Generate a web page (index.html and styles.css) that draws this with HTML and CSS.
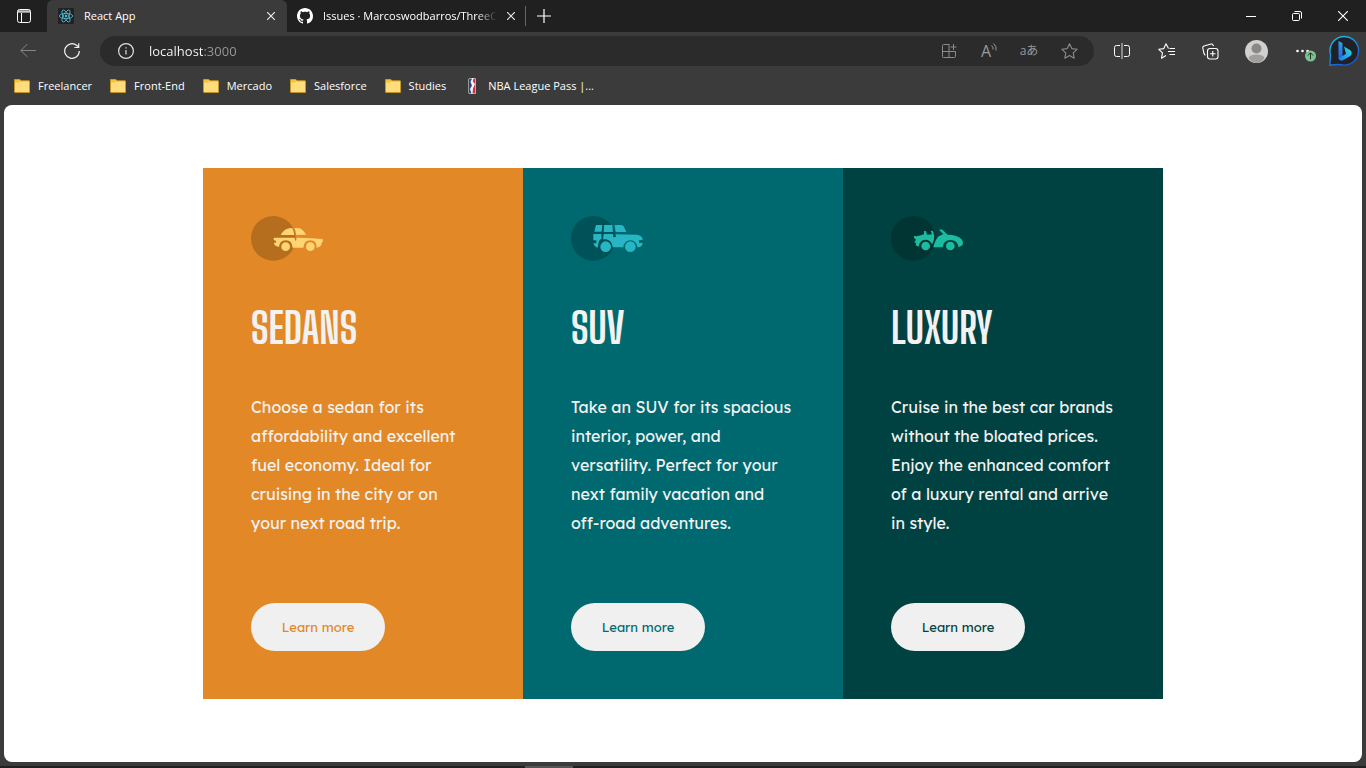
FILE: index.html
```html
<!DOCTYPE html>
<html lang="en">
<head>
<meta charset="utf-8">
<meta name="viewport" content="width=device-width, initial-scale=1">
<title>React App</title>
<link rel="stylesheet" href="styles.css">
</head>
<body>
<header class="browser">
  <div class="tabstrip">
    <button class="tab-actions" aria-label="Tab actions"><svg width="14" height="14" viewBox="0 0 14 14" fill="none" stroke="#fff"><rect x=".5" y=".5" width="13" height="13" rx="2"/><path d="M1 2h12M1 3h12M4.500 4v9"/></svg></button>
    <div class="tab tab-active">
      <svg class="favicon" width="16" height="16" viewBox="0 0 16 16" fill="none" stroke="#53c1de" stroke-width=".8"><rect width="16" height="16" rx="1" fill="#222" stroke="none"/><ellipse cx="8" cy="8" rx="6.700" ry="2.600"/><ellipse cx="8" cy="8" rx="6.700" ry="2.600" transform="rotate(60 8 8)"/><ellipse cx="8" cy="8" rx="6.700" ry="2.600" transform="rotate(120 8 8)"/><circle cx="8" cy="8" r="1.200" fill="#53c1de" stroke="none"/></svg>
      <a class="tab-title" href="#">React App</a>
      <button class="tab-close" aria-label="Close tab"><svg width="8" height="8" viewBox="0 0 8 8" stroke="#e8e8e8" stroke-width="1.200"><path d="M0 0l8 8M8 0L0 8"/></svg></button>
    </div>
    <div class="tab">
      <svg class="favicon" width="16" height="16" viewBox="0 0 16 16" fill="#fff"><path d="M8 0C3.580 0 0 3.580 0 8c0 3.540 2.290 6.530 5.470 7.590.4.070.55-.17.55-.38 0-.19-.01-.82-.01-1.490-2.010.37-2.530-.49-2.690-.94-.09-.23-.48-.94-.82-1.130-.28-.15-.68-.52-.01-.53.63-.01 1.080.58 1.230.82.72 1.210 1.870.87 2.330.66.070-.52.28-.87.51-1.070-1.780-.2-3.640-.89-3.640-3.950 0-.87.31-1.590.82-2.150-.08-.2-.36-1.020.08-2.120 0 0 .67-.21 2.200.82.64-.18 1.320-.27 2-.27s1.360.09 2 .27c1.530-1.040 2.200-.82 2.200-.82.44 1.100.16 1.920.08 2.120.51.56.82 1.270.82 2.150 0 3.070-1.870 3.750-3.650 3.950.29.25.54.73.54 1.480 0 1.070-.01 1.930-.01 2.200 0 .21.15.46.55.38A8.010 8.010 0 0016 8c0-4.420-3.580-8-8-8z"/></svg>
      <a class="tab-title tab-fade" href="#">Issues · Marcoswodbarros/ThreeC</a>
      <button class="tab-close" aria-label="Close tab"><svg width="8" height="8" viewBox="0 0 8 8" stroke="#e8e8e8" stroke-width="1.200"><path d="M0 0l8 8M8 0L0 8"/></svg></button>
    </div>
    <button class="new-tab" aria-label="New tab"><svg width="14" height="14" viewBox="0 0 14 14" stroke="#fff" stroke-width="1.200"><path d="M0 7h14M7 0v14"/></svg></button>
    <div class="window-controls">
      <button class="window-button" aria-label="Minimize"><svg width="10" height="10" viewBox="0 0 10 10" stroke="#fff"><path d="M0 5.500h10"/></svg></button>
      <button class="window-button" aria-label="Restore"><svg width="10" height="10" viewBox="0 0 10 10" fill="none" stroke="#fff"><rect x=".5" y="2.500" width="7" height="7" rx="1"/><path d="M2.500 .5H8q1.500 0 1.500 1.500v5.500"/></svg></button>
      <button class="window-button" aria-label="Close"><svg width="10" height="10" viewBox="0 0 10 10" stroke="#fff" stroke-width="1.100"><path d="M0 0l10 10M10 0L0 10"/></svg></button>
    </div>
  </div>

  <div class="toolbar">
    <button class="tool" aria-label="Back"><svg width="16" height="14" viewBox="0 0 16 14" fill="none" stroke="#858585"><path d="M16 6.500H.8M7.500 0L.8 6.500l6.700 6.500"/></svg></button>
    <button class="tool" aria-label="Refresh"><svg width="16" height="16" viewBox="0 0 16 16" fill="none" stroke="#f2f2f2" stroke-width="1.200"><path d="M15.300 8A7.300 7.300 0 1 1 12.800 2.500L14.500 4.200M14.700.3v4.200h-4.300"/></svg></button>
    <div class="address">
      <button class="site-info" aria-label="Site information"><svg width="16" height="16" viewBox="0 0 16 16" fill="none" stroke="#e0e0e0" stroke-width="1.200"><circle cx="8" cy="8" r="7.400"/><path d="M8 7v4.500M8 4.300v1.200"/></svg></button>
      <input class="url" type="text" aria-label="Address" value="localhost:3000">
      <button class="address-tool" aria-label="Apps"><svg width="16" height="16" viewBox="0 0 16 16" fill="none" stroke="#8b8b8b"><path d="M8.500 1.500h-6q-1 0-1 1v11q0 1 1 1h11q1 0 1-1v-5h-13M8 1.500v13M12.500 1v6M9.500 4h6"/></svg></button>
      <button class="address-tool read-aloud" aria-label="Read aloud"><span>A</span><svg width="6" height="10" viewBox="0 0 6 10" fill="none" stroke="#999"><path d="M.5 2.500q2 1.500 1.500 4M2.500.5q3.500 3 2.500 7"/></svg></button>
      <button class="address-tool translate" aria-label="Translate">aあ</button>
      <button class="address-tool" aria-label="Add to favorites"><svg width="17" height="16" viewBox="0 0 17 16" fill="none" stroke="#8b8b8b" stroke-width="1.100" stroke-linejoin="round"><path d="M8.500.8l2.300 4.800 5.300.7-3.900 3.600 1 5.300-4.700-2.600-4.700 2.600 1-5.300L.9 6.300l5.300-.7z"/></svg></button>
    </div>
    <button class="tool" aria-label="Split screen"><svg width="16" height="16" viewBox="0 0 16 16" fill="none" stroke="#fff"><path d="M6 2.500H2.500q-2 0-2 2v7q0 2 2 2H6M10 2.500h3.500q2 0 2 2v7q0 2-2 2H10"/><path d="M8 0v16" stroke="#ddd"/></svg></button>
    <button class="tool" aria-label="Favorites"><svg width="17" height="16" viewBox="0 0 17 16" fill="none" stroke="#fff" stroke-width="1.100" stroke-linejoin="round"><path d="M10.500 5.500L8 .8 5.800 5.600l-5 .7 3.700 3.500-1 5.400L8 12.500M11.500 5.500H17M10 8.500h7M11.500 11.500H17"/></svg></button>
    <button class="tool" aria-label="Collections"><svg width="17" height="17" viewBox="0 0 17 17" fill="none" stroke="#fff" stroke-width="1.100"><path d="M3.500 12Q2.500 12 2 10.500L.8 5Q.5 3.500 2 3L9 1q1.500-.3 2 1l.6 1"/><rect x="5.500" y="5.500" width="10.500" height="10.500" rx="2.500"/><path d="M10.750 8v5.500M8 10.750h5.500"/></svg></button>
    <button class="tool tool-profile" aria-label="Profile"><svg width="23" height="23" viewBox="0 0 23 23"><circle cx="11.500" cy="11.500" r="11.500" fill="#d2d0ce"/><circle cx="11.500" cy="8.500" r="5" fill="#8a8886"/><path d="M3.500 18q1-3.500 8-3.500t8 3.500q-3 5-8 5t-8-5z" fill="#a19f9d"/></svg></button>
    <button class="tool tool-more" aria-label="Settings and more"><svg width="26" height="22" viewBox="0 0 26 22"><g fill="#fff"><circle cx="6.500" cy="11" r="1.300"/><circle cx="11.500" cy="11" r="1.300"/><circle cx="16.500" cy="11" r="1.300"/></g><circle cx="19.500" cy="16" r="5.500" fill="#7cc48d"/><path d="M19.500 19.300V13M16.800 15.500l2.700-2.700 2.700 2.700" fill="none" stroke="#252b26"/></svg></button>
    <button class="bing" aria-label="Bing chat"><svg width="32" height="32" viewBox="0 0 32 32"><defs><linearGradient id="ring" x1="0" y1="0" x2=".6" y2="1"><stop offset="0" stop-color="#1fc5e8"/><stop offset="1" stop-color="#1757d6"/></linearGradient><linearGradient id="bee" x1="0" y1="0" x2="0" y2="1"><stop offset="0" stop-color="#29a5ee"/><stop offset="1" stop-color="#245fe6"/></linearGradient><linearGradient id="tail" x1="1" y1="0" x2="0" y2="1"><stop offset="0" stop-color="#2ce0dd"/><stop offset="1" stop-color="#1f76f1"/></linearGradient></defs><path d="M1.800 30.200L2.600 20A14.300 14.300 0 1 1 16 30.100Q11 29 1.800 30.200z" fill="#202124" stroke="url(#ring)" stroke-width="1.400"/><path d="M10.500 6l4 2v13.500l-4 2.500z" fill="url(#bee)"/><path d="M16 11.500l5.500 3.200q2.700 1.600 2 4.200-.5 1.600-2 2.500L15 25.300q-3.500 1.200-4.500-1.800l7.500-4.700z" fill="url(#tail)"/></svg></button>
  </div>

  <nav class="bookmarks" aria-label="Favorites bar">
    <a class="bookmark" href="#"><svg width="16" height="14" viewBox="0 0 16 14"><path d="M.5 1q0-.8.8-.8h4.200L7 1.800h8q.7 0 .7.800v10.200q0 .8-.8.8H1.300q-.8 0-.8-.8z" fill="#ffdc7c" stroke="#c8951b"/><path d="M1 1h4.300l1.200 1.200L5.200 3.500H1z" fill="#f5c531"/></svg>Freelancer</a>
    <a class="bookmark" href="#"><svg width="16" height="14" viewBox="0 0 16 14"><path d="M.5 1q0-.8.8-.8h4.200L7 1.800h8q.7 0 .7.800v10.200q0 .8-.8.8H1.300q-.8 0-.8-.8z" fill="#ffdc7c" stroke="#c8951b"/><path d="M1 1h4.300l1.200 1.200L5.200 3.500H1z" fill="#f5c531"/></svg>Front-End</a>
    <a class="bookmark" href="#"><svg width="16" height="14" viewBox="0 0 16 14"><path d="M.5 1q0-.8.8-.8h4.200L7 1.800h8q.7 0 .7.800v10.200q0 .8-.8.8H1.300q-.8 0-.8-.8z" fill="#ffdc7c" stroke="#c8951b"/><path d="M1 1h4.300l1.200 1.200L5.200 3.500H1z" fill="#f5c531"/></svg>Mercado</a>
    <a class="bookmark" href="#"><svg width="16" height="14" viewBox="0 0 16 14"><path d="M.5 1q0-.8.8-.8h4.200L7 1.800h8q.7 0 .7.800v10.200q0 .8-.8.8H1.300q-.8 0-.8-.8z" fill="#ffdc7c" stroke="#c8951b"/><path d="M1 1h4.300l1.200 1.200L5.200 3.500H1z" fill="#f5c531"/></svg>Salesforce</a>
    <a class="bookmark" href="#"><svg width="16" height="14" viewBox="0 0 16 14"><path d="M.5 1q0-.8.8-.8h4.200L7 1.800h8q.7 0 .7.800v10.200q0 .8-.8.8H1.300q-.8 0-.8-.8z" fill="#ffdc7c" stroke="#c8951b"/><path d="M1 1h4.300l1.200 1.200L5.200 3.500H1z" fill="#f5c531"/></svg>Studies</a>
    <a class="bookmark" href="#"><svg width="16" height="16" viewBox="0 0 16 16"><rect x="4.500" width="7.500" height="16" rx="1.500" fill="#f4f4f6"/><path d="M5 1.500q0-1 1-1h2L6.500 4 8 7.500 6 11l1.500 4.500H6q-1 0-1-1z" fill="#24478f"/><path d="M9.500.5h1q1 0 1 1v13q0 1-1 1H8.500l.5-5L11 6 8.800 3.500z" fill="#cf2f45"/></svg>NBA League Pass |...</a>
  </nav>
</header>

<main class="page">
  <div class="cards">
    <section class="card card-sedans">
      <svg class="car" width="72" height="45" viewBox="0 0 216 135"><circle cx="67" cy="67" r="67" fill="#b56d1e"/><g fill="#ffd473"><path d="M89 57q9-15 18-18 8-3 17-3 5 10 6 21zM130 36q14-1 20 2 8 6 16 18l-30 1q-1-11-6-21z"/><path d="M70 65h61q1 10 3 10t3-10q50 1 77 4 3 5 0 10h-2q1 9-6 13-4 2-9 3 0-22-19-22t-21 22h-32q-2-22-21-22-18 0-20 20l-9-3q-6-3-6-10h6v-6l-6-1q-2-5 0-8z"/><circle cx="104" cy="92" r="13"/><circle cx="178" cy="92" r="13"/></g></svg>
      <h2 class="card-title">SEDANS</h2>
      <p class="card-text">Choose a sedan for its affordability and excellent fuel economy. Ideal for cruising in the city or on your next road trip.</p>
      <button class="learn">Learn more</button>
    </section>
    <section class="card card-suv">
      <svg class="car" width="72" height="45" viewBox="0 0 216 135"><circle cx="67" cy="67" r="67" fill="#005259"/><g fill="#28b5c4"><path d="M75 27h19l-2 20H70zM99 27h25l2 21H98zM131 27h18q6 0 9 4l8 17h-32z"/><path d="M67 54h24l1 13q-8 5-10 17-1 6-2 11-11-3-13-13h9v-9h-9zM98 54h28l1 10 8-1-1-8 63 1q15 2 17 10l1 6h-11v9h11q0 10-12 13h-4a21 21 0 0 0-42 0h-32q-1-20-20-24-6-1-9 0z"/><circle cx="104" cy="92" r="16"/><circle cx="178" cy="92" r="16"/></g></svg>
      <h2 class="card-title">SUV</h2>
      <p class="card-text">Take an SUV for its spacious interior, power, and versatility. Perfect for your next family vacation and off-road adventures.</p>
      <button class="learn">Learn more</button>
    </section>
    <section class="card card-luxury">
      <svg class="car" width="72" height="45" viewBox="0 0 216 135"><circle cx="67" cy="67" r="67" fill="#003534"/><g fill="#1bbca0"><path d="M68 60q16 2 31-5V46q3-3 6 0l3 10 15-1-4-10q5-3 8 3 4 12 2 23l-5 12h-2q-6-12-19-12-17 1-20 21l-9-4 1-7-5-2 5-8-5-4z"/><path d="M145 43q4-6 10-1l15 14q30 0 43 15 5 9 1 17l-11 6q-3-22-25-22-21 1-23 22h-28q2-14 14-32l16-8z"/><circle cx="104" cy="90" r="13"/><circle cx="178" cy="90" r="13"/></g></svg>
      <h2 class="card-title">LUXURY</h2>
      <p class="card-text">Cruise in the best car brands without the bloated prices. Enjoy the enhanced comfort of a luxury rental and arrive in style.</p>
      <button class="learn">Learn more</button>
    </section>
  </div>
</main>
<footer class="taskbar"><span class="running-app"></span></footer>
</body>
</html>
```
FILE: styles.css
```css
* { box-sizing: border-box; }

body {
  margin: 0;
  min-height: 100vh;
  display: flex;
  flex-direction: column;
  background: #3b3b3b;
  color: #fff;
  font: 11px/16px "Segoe UI", "Open Sans", sans-serif;
}

button {
  display: flex;
  align-items: center;
  justify-content: center;
  flex: none;
  padding: 0;
  border: 0;
  background: none;
  color: inherit;
  font: inherit;
}

a { color: inherit; text-decoration: none; }
svg { display: block; flex: none; }

/* Tab strip */
.tabstrip { display: flex; height: 32px; background: #202020; }
.tab-actions { width: 47px; }
.tab {
  display: flex;
  align-items: center;
  width: 240px;
  padding: 0 11px;
  gap: 10px;
  border-right: 1px solid transparent;
}
.tab-active { background: #3b3b3b; border-radius: 6px 6px 0 0; }
.tab + .tab { position: relative; padding-left: 10px; }
.tab + .tab::after {
  content: "";
  position: absolute;
  right: 0;
  top: 6px;
  width: 1px;
  height: 20px;
  background: #666;
}
.tab-title { flex: 1; white-space: nowrap; }
.tab-fade {
  -webkit-mask-image: linear-gradient(to left, transparent, #000 20px);
  mask-image: linear-gradient(to left, transparent, #000 20px);
}
.tab-close { width: 8px; height: 16px; }
.new-tab { width: 34px; }
.window-controls { display: flex; margin-left: auto; }
.window-button { width: 46px; }

/* Toolbar */
.toolbar { display: flex; align-items: center; height: 38px; padding: 0 6px; }
.tool { width: 44px; height: 30px; }
.tool-profile { width: 48px; }
.tool-more { width: 48px; }
.bing { width: 32px; height: 32px; }
.address {
  display: flex;
  align-items: center;
  flex: 1;
  height: 30px;
  margin: 0 6px;
  padding: 0 5px 0 18px;
  border-radius: 15px;
  background: #2b2b2b;
}
.url {
  flex: 1;
  min-width: 0;
  margin-left: 15px;
  padding: 0;
  border: 0;
  outline: 0;
  background: linear-gradient(to right, #fff 54px, #999 54px);
  -webkit-background-clip: text;
  background-clip: text;
  color: transparent;
  font: 13px/20px "Segoe UI", "Open Sans", sans-serif;
}
.address-tool { width: 40px; height: 30px; color: #999; }
.read-aloud { font-size: 16px; align-items: center; }
.read-aloud svg { margin-bottom: 6px; }
.translate { font: 12px/16px "Open Sans", "Noto Sans CJK JP", sans-serif; }

/* Favorites bar */
.bookmarks { display: flex; align-items: center; gap: 18px; height: 35px; padding: 0 14px 3px; }
.bookmark { display: flex; align-items: center; gap: 8px; white-space: nowrap; }

/* Page */
.page {
  display: flex;
  flex: 1;
  align-items: center;
  justify-content: center;
  margin: 0 4px 4px;
  border-radius: 8px;
  background: #fff;
}
.cards { display: flex; width: 100%; max-width: 960px; }
.card {
  display: flex;
  flex: 1;
  flex-direction: column;
  align-items: flex-start;
  padding: 48px;
  color: #f2f2f2;
}
.card-sedans { --accent: #e28827; background: var(--accent); }
.card-suv { --accent: #00696f; background: var(--accent); }
.card-luxury { --accent: #004241; background: var(--accent); }
.card-title {
  margin: 43px 0 41px;
  font: bold 43px/48px "Big Shoulders Display", "Liberation Sans Narrow", "Liberation Sans", sans-serif;
}
.card-text {
  margin: 0 0 65px;
  font: 16px/29px "Lexend Deca", Inter, sans-serif;
}
.learn {
  min-width: 134px;
  height: 48px;
  margin-top: auto;
  padding: 0 28px;
  border-radius: 24px;
  background: #f0f0f0;
  color: var(--accent);
  font: 13px/20px "Lexend Deca", Inter, sans-serif;
}

.taskbar { display: flex; justify-content: center; height: 2px; background: #202020; }
.running-app { width: 48px; margin-right: 268px; background: #555; }
```
